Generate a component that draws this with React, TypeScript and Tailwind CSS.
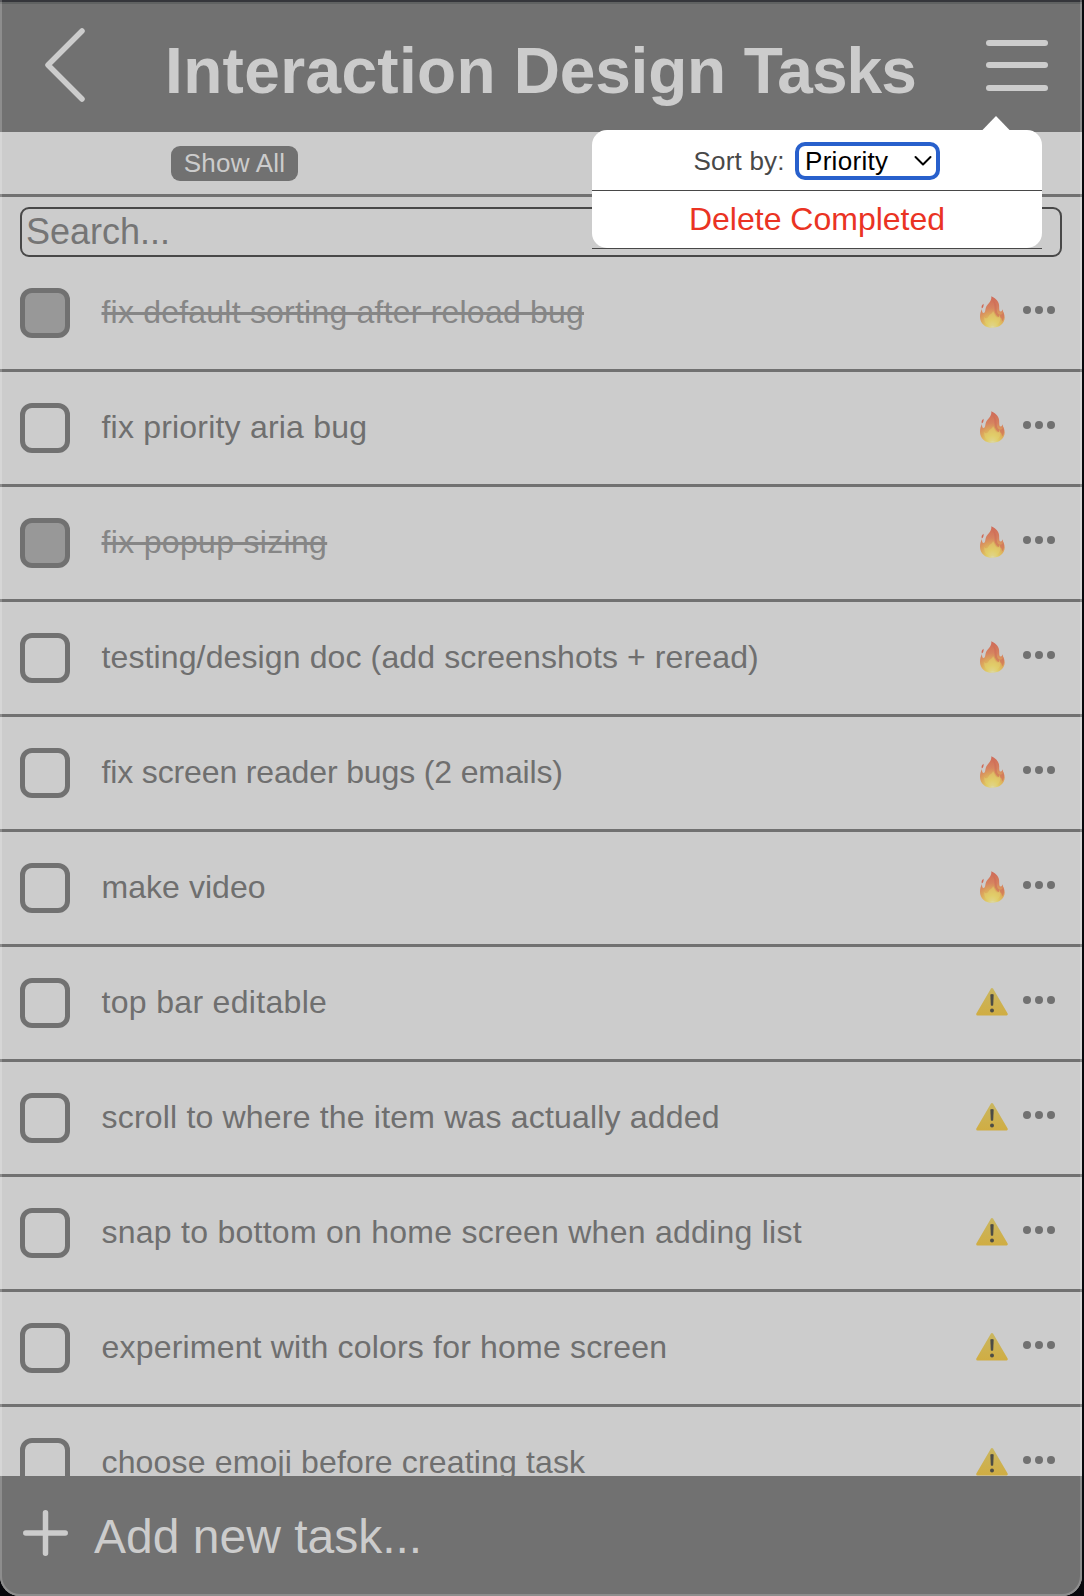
import React from "react";

type Priority = "high" | "medium";
type Task = { text: string; done?: boolean; priority: Priority; tracking: string };

const tasks: Task[] = [
  { text: "fix default sorting after reload bug", done: true, priority: "high", tracking: "tracking-[0.210px]" },
  { text: "fix priority aria bug", priority: "high", tracking: "tracking-[0.200px]" },
  { text: "fix popup sizing", done: true, priority: "high", tracking: "tracking-[0.320px]" },
  { text: "testing/design doc (add screenshots + reread)", priority: "high", tracking: "tracking-[0.120px]" },
  { text: "fix screen reader bugs (2 emails)", priority: "high", tracking: "tracking-[-0.140px]" },
  { text: "make video", priority: "high", tracking: "tracking-[0.050px]" },
  { text: "top bar editable", priority: "medium", tracking: "tracking-[0.320px]" },
  { text: "scroll to where the item was actually added", priority: "medium", tracking: "tracking-[0.190px]" },
  { text: "snap to bottom on home screen when adding list", priority: "medium", tracking: "tracking-[0.260px]" },
  { text: "experiment with colors for home screen", priority: "medium", tracking: "tracking-[0.190px]" },
  { text: "choose emoji before creating task", priority: "medium", tracking: "tracking-[0.160px]" },
];

function Fire() {
  return (
    <svg width="40" height="44" viewBox="0 0 40 44" className="shrink-0">
      <defs>
        <radialGradient id="flame" gradientUnits="userSpaceOnUse" cx="20.5" cy="36" r="29">
          <stop offset="0" stopColor="#dedaa6" />
          <stop offset="0.2" stopColor="#e0cb62" />
          <stop offset="0.4" stopColor="#dca95c" />
          <stop offset="0.62" stopColor="#d68460" />
          <stop offset="1" stopColor="#cf6a58" />
        </radialGradient>
      </defs>
      <path
        fill="url(#flame)"
        d="M19.300 6.200C24.500 8.700 27.600 12 27.200 17.500C27.100 19.800 27.500 21.600 28.700 21.600C30 21.600 30.200 20 30.600 19.300C30.800 22 32.700 24 32.700 27.600C32.600 34 27 37.800 20.300 37.800C13.200 37.800 8 33.500 8 26.700C8 23.400 8.800 21.500 10 19C9.900 21.500 10.400 23 11.600 23C13.700 23 12.900 18.500 14.800 15.700C16.800 12.700 19.800 11 19.300 6.200Z"
      />
      <path fill="#cf6855" d="M11.500 13.800C9.900 15 9.200 16.300 9.800 18.600C11.100 17.600 11.900 16.200 11.500 13.800Z" />
      <path
        fill="#cf6a58"
        fillOpacity="0.6"
        d="M20.800 10C24.800 13 24.500 17 24.800 20C25 23 26.500 25 28.800 24.600C30.500 24.300 31 23 31.200 22C33 27 31.500 30 30 31.500C30.200 29.500 29.500 28 28.200 27.400C25 27.200 22.800 24 22.600 20C22.500 16.500 22.600 14 20.800 10Z"
      />
      <path
        fill="#e2cf70"
        fillOpacity="0.55"
        d="M21 21C23 24 23.500 27.500 25.500 27.500C27 27.500 27.300 26 27.500 24.500C29.500 29 28 36 20.500 36.300C13.500 36 11.500 31 12.500 27C13.500 29 15.500 28.500 16.500 26.500C17.500 24 20.500 24 21 21Z"
      />
    </svg>
  );
}

function Warning() {
  return (
    <svg width="40" height="44" viewBox="0 0 40 44" className="shrink-0">
      <defs>
        <linearGradient id="sign" gradientUnits="userSpaceOnUse" x1="0" y1="8" x2="0" y2="35">
          <stop offset="0" stopColor="#c9b660" />
          <stop offset="1" stopColor="#d0ad43" />
        </linearGradient>
      </defs>
      <path
        d="M20 9.200 34.600 34.200H5.400Z"
        fill="url(#sign)"
        stroke="url(#sign)"
        strokeWidth="2.400"
        strokeLinejoin="round"
      />
      <path d="M18.300 14.600Q20 13.300 21.700 14.600L21.200 25.300Q20 26.400 18.800 25.300Z" fill="#4c4c46" />
      <circle cx="20" cy="30.400" r="2" fill="#4c4c46" />
    </svg>
  );
}

function TaskRow({ task }: { task: Task }) {
  return (
    <li className="flex h-[115px] shrink-0 items-start border-b-[3px] border-[#717171] pl-5">
      <div
        className={
          task.done
            ? "mt-[31px] size-[50px] shrink-0 rounded-[12px] border-[5px] border-[#717171] bg-[#989898]"
            : "mt-[31px] size-[50px] shrink-0 rounded-[12px] border-[5px] border-[#717171]"
        }
      />
      <span
        className={
          "ml-[31.500px] mt-[37px] whitespace-nowrap text-[32px] leading-[36px] " +
          task.tracking +
          (task.done ? " text-[#868686] line-through decoration-[3px]" : " text-[#6f6f6f]")
        }
      >
        {task.text}
      </span>
      <div className="ml-auto mt-[33px] flex items-start pr-[27px]">
        {task.priority === "high" ? <Fire /> : <Warning />}
        <div className="ml-[11px] mt-4 flex gap-1">
          <i className="size-2 rounded-full bg-[#717171]" />
          <i className="size-2 rounded-full bg-[#717171]" />
          <i className="size-2 rounded-full bg-[#717171]" />
        </div>
      </div>
    </li>
  );
}

export default function App() {
  return (
    <div className="h-[1596px] w-[1084px] overflow-hidden bg-[#08080c] font-['Liberation_Sans',Arial,sans-serif]">
      <div className="relative flex h-full w-[1082px] flex-col overflow-hidden rounded-b-[20px] bg-[#cccccc]">
        <header className="relative flex h-[132px] shrink-0 items-start bg-[#717171] text-[#cccccc]">
          <svg width="44" height="78" viewBox="0 0 44 78" className="ml-[43px] mt-[26px] shrink-0">
            <path d="M39 5 5 39 39 73" fill="none" stroke="currentColor" strokeWidth="5.500" strokeLinecap="round" strokeLinejoin="round" />
          </svg>
          <h1 className="ml-[78px] mt-[34px] whitespace-nowrap text-[64px] font-bold leading-[74px]">
            <span className="tracking-[0.350px]">Interaction</span> <span className="tracking-[-0.200px]">Design</span>{" "}
            <span className="tracking-[-0.900px]">Tasks</span>
          </h1>
          <div className="absolute left-[986px] top-[39.500px] flex w-[62px] flex-col gap-[16.500px]">
            <i className="h-[6px] rounded-full bg-[#cccccc]" />
            <i className="h-[6px] rounded-full bg-[#cccccc]" />
            <i className="h-[6px] rounded-full bg-[#cccccc]" />
          </div>
          <div className="absolute inset-x-0 top-0 h-1 border-t-2 border-[#35363b] bg-[#606262]" />
        </header>

        <div className="flex h-[65px] shrink-0 items-start border-b-[3px] border-[#717171] pl-[171px] pt-[14px]">
          <button className="h-[35px] w-[127px] rounded-[9px] bg-[#717171] text-[26px] leading-[35px] tracking-[0.250px] text-[#cccccc]">Show All</button>
        </div>

        <div className="mx-5 mt-[10px] h-[50px] shrink-0 rounded-[9px] border-2 border-[#484848] pl-1 text-[36px] leading-[46px] text-[#757575]">
          Search...
        </div>

        <ul className="flex min-h-0 flex-1 flex-col overflow-hidden">
          {tasks.map((t) => (
            <TaskRow key={t.text} task={t} />
          ))}
        </ul>

        <footer className="flex h-[120px] shrink-0 items-start bg-[#717171] pl-[22.500px] text-[#cccccc]">
          <svg width="45" height="46" viewBox="0 0 45 46" className="mt-[34px] shrink-0">
            <path d="M22.500 2.800V43.200M2.800 23H42.200" stroke="currentColor" strokeWidth="5.500" strokeLinecap="round" />
          </svg>
          <span className="ml-[26.500px] mt-[33px] whitespace-nowrap text-[48px] leading-[55px]">Add new task...</span>
        </footer>

        <div className="pointer-events-none absolute inset-0 rounded-b-[20px] border-x-2 border-b-2 border-white/20" />

        <div className="absolute left-[592px] top-[130px] h-[119px] w-[450px] border-b border-[#484848]">
          <svg width="30" height="15" viewBox="0 0 30 15" className="absolute left-[389px] top-[-14px]">
            <path d="M15 0 29 14.500H1Z" fill="#fff" />
          </svg>
          <div className="flex h-[118px] flex-col rounded-[15px] bg-white">
            <div className="flex h-[61px] items-start border-b border-[#484848] pl-[101.500px] pt-3">
              <span className="mt-1 w-[101.500px] whitespace-nowrap text-[26px] leading-[30px] tracking-[0.200px] text-[#484848]">Sort by:</span>
              <div className="flex h-[38px] w-[145px] items-center justify-between rounded-[10px] border-4 border-[#2860cc] pl-1.5 pr-1 text-[26px] leading-[30px] text-black">
                <span className="tracking-[0.300px]">Priority</span>
                <svg width="18" height="12" viewBox="0 0 18 12">
                  <path d="M1.500 2 9 9.500 16.500 2" fill="none" stroke="#000" strokeWidth="2" strokeLinecap="round" strokeLinejoin="round" />
                </svg>
              </div>
            </div>
            <button className="h-[57px] text-[32px] leading-[54px] text-[#ea3323]"><span className="relative -top-px">Delete Completed</span></button>
          </div>
        </div>
      </div>
    </div>
  );
}
